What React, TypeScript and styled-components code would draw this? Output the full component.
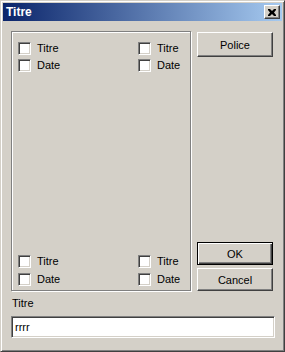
import styled, { createGlobalStyle } from "styled-components";

const GlobalStyle = createGlobalStyle`
  html, body {
    margin: 0;
    padding: 0;
    background: #d4d0c8;
  }
  * {
    box-sizing: border-box;
  }
`;

const Window = styled.div`
  width: 285px;
  height: 352px;
  background: #d4d0c8;
  border: 1px solid;
  border-color: #d4d0c8 #404040 #404040 #d4d0c8;
  box-shadow: inset 1px 1px #ffffff, inset -1px -1px #808080;
  padding: 2px;
  display: flex;
  flex-direction: column;
  font-family: "Liberation Sans", Arial, sans-serif;
  font-size: 11px;
  color: #000;
`;

const TitleBar = styled.div`
  height: 18px;
  display: flex;
  align-items: center;
  justify-content: space-between;
  padding: 0 2px 0 3px;
  background: linear-gradient(90deg, #0a246a 0%, #a6caf0 100%);
`;

const TitleText = styled.span`
  color: #fff;
  font-weight: bold;
  font-size: 12px;
`;

const CloseButton = styled.div`
  width: 16px;
  height: 14px;
  background: #d4d0c8;
  border: 1px solid;
  border-color: #fff #404040 #404040 #fff;
  box-shadow: inset -1px -1px #808080;
  display: flex;
  align-items: center;
  justify-content: center;
`;

const Body = styled.div`
  flex: 1;
  display: flex;
  flex-direction: column;
  padding: 10px 8px 0 8px;
`;

const MainRow = styled.div`
  display: flex;
  gap: 6px;
  height: 260px;
`;

const GroupBox = styled.div`
  width: 180px;
  height: 100%;
  border: 1px solid #808080;
  box-shadow: inset 1px 1px #fff, 1px 1px #fff;
  display: flex;
  flex-direction: column;
  justify-content: space-between;
  padding: 10px 0 4px 6px;
`;

const CheckGrid = styled.div<{ $gap: number }>`
  display: grid;
  grid-template-columns: 120px 1fr;
  row-gap: ${(p) => p.$gap}px;
`;

const CheckItem = styled.label`
  display: flex;
  align-items: center;
  gap: 6px;
  height: 13px;
  line-height: 13px;
`;

const CheckBox = styled.span`
  width: 13px;
  height: 13px;
  background: #fff;
  border: 1px solid;
  border-color: #808080 #fff #fff #808080;
  box-shadow: inset 1px 1px #404040, inset -1px -1px #d4d0c8;
  flex-shrink: 0;
`;

const ButtonColumn = styled.div`
  width: 76px;
  display: flex;
  flex-direction: column;
  justify-content: space-between;
  padding-top: 1px;
`;

const BottomButtons = styled.div`
  display: flex;
  flex-direction: column;
  gap: 3px;
`;

const Button = styled.div<{ $default?: boolean; $h?: number }>`
  height: ${(p) => p.$h ?? 23}px;
  display: flex;
  align-items: center;
  justify-content: center;
  background: #d4d0c8;
  border: 1px solid;
  border-color: ${(p) =>
    p.$default ? "#000" : "#fff #404040 #404040 #fff"};
  box-shadow: ${(p) =>
    p.$default
      ? "inset 1px 1px #fff, inset -1px -1px #404040, inset -2px -2px #808080"
      : "inset -1px -1px #808080"};
`;

const FieldLabel = styled.div`
  margin-top: 6px;
  padding-left: 1px;
  line-height: 13px;
`;

const TextInput = styled.div`
  margin-top: 6px;
  margin-right: -1px;
  height: 22px;
  background: #fff;
  border: 1px solid;
  border-color: #808080 #fff #fff #808080;
  box-shadow: inset 1px 1px #404040, inset -1px -1px #d4d0c8;
  padding: 0 3px;
  display: flex;
  align-items: center;
  font-size: 11px;
`;

function Check({ label }: { label: string }) {
  return (
    <CheckItem>
      <CheckBox />
      {label}
    </CheckItem>
  );
}

export default function App() {
  return (
    <>
      <GlobalStyle />
      <Window>
        <TitleBar>
          <TitleText>Titre</TitleText>
          <CloseButton>
            <svg width="8" height="7" viewBox="0 0 8 7">
              <path
                d="M0 0h2l2 2 2-2h2v1L6 3.5 8 6v1H6L4 5 2 7H0V6l2-2.5L0 1z"
                fill="#000"
              />
            </svg>
          </CloseButton>
        </TitleBar>
        <Body>
          <MainRow>
            <GroupBox>
              <CheckGrid $gap={4}>
                <Check label="Titre" />
                <Check label="Titre" />
                <Check label="Date" />
                <Check label="Date" />
              </CheckGrid>
              <CheckGrid $gap={5}>
                <Check label="Titre" />
                <Check label="Titre" />
                <Check label="Date" />
                <Check label="Date" />
              </CheckGrid>
            </GroupBox>
            <ButtonColumn>
              <Button $h={25}>Police</Button>
              <BottomButtons>
                <Button $default>OK</Button>
                <Button>Cancel</Button>
              </BottomButtons>
            </ButtonColumn>
          </MainRow>
          <FieldLabel>Titre</FieldLabel>
          <TextInput>rrrr</TextInput>
        </Body>
      </Window>
    </>
  );
}
